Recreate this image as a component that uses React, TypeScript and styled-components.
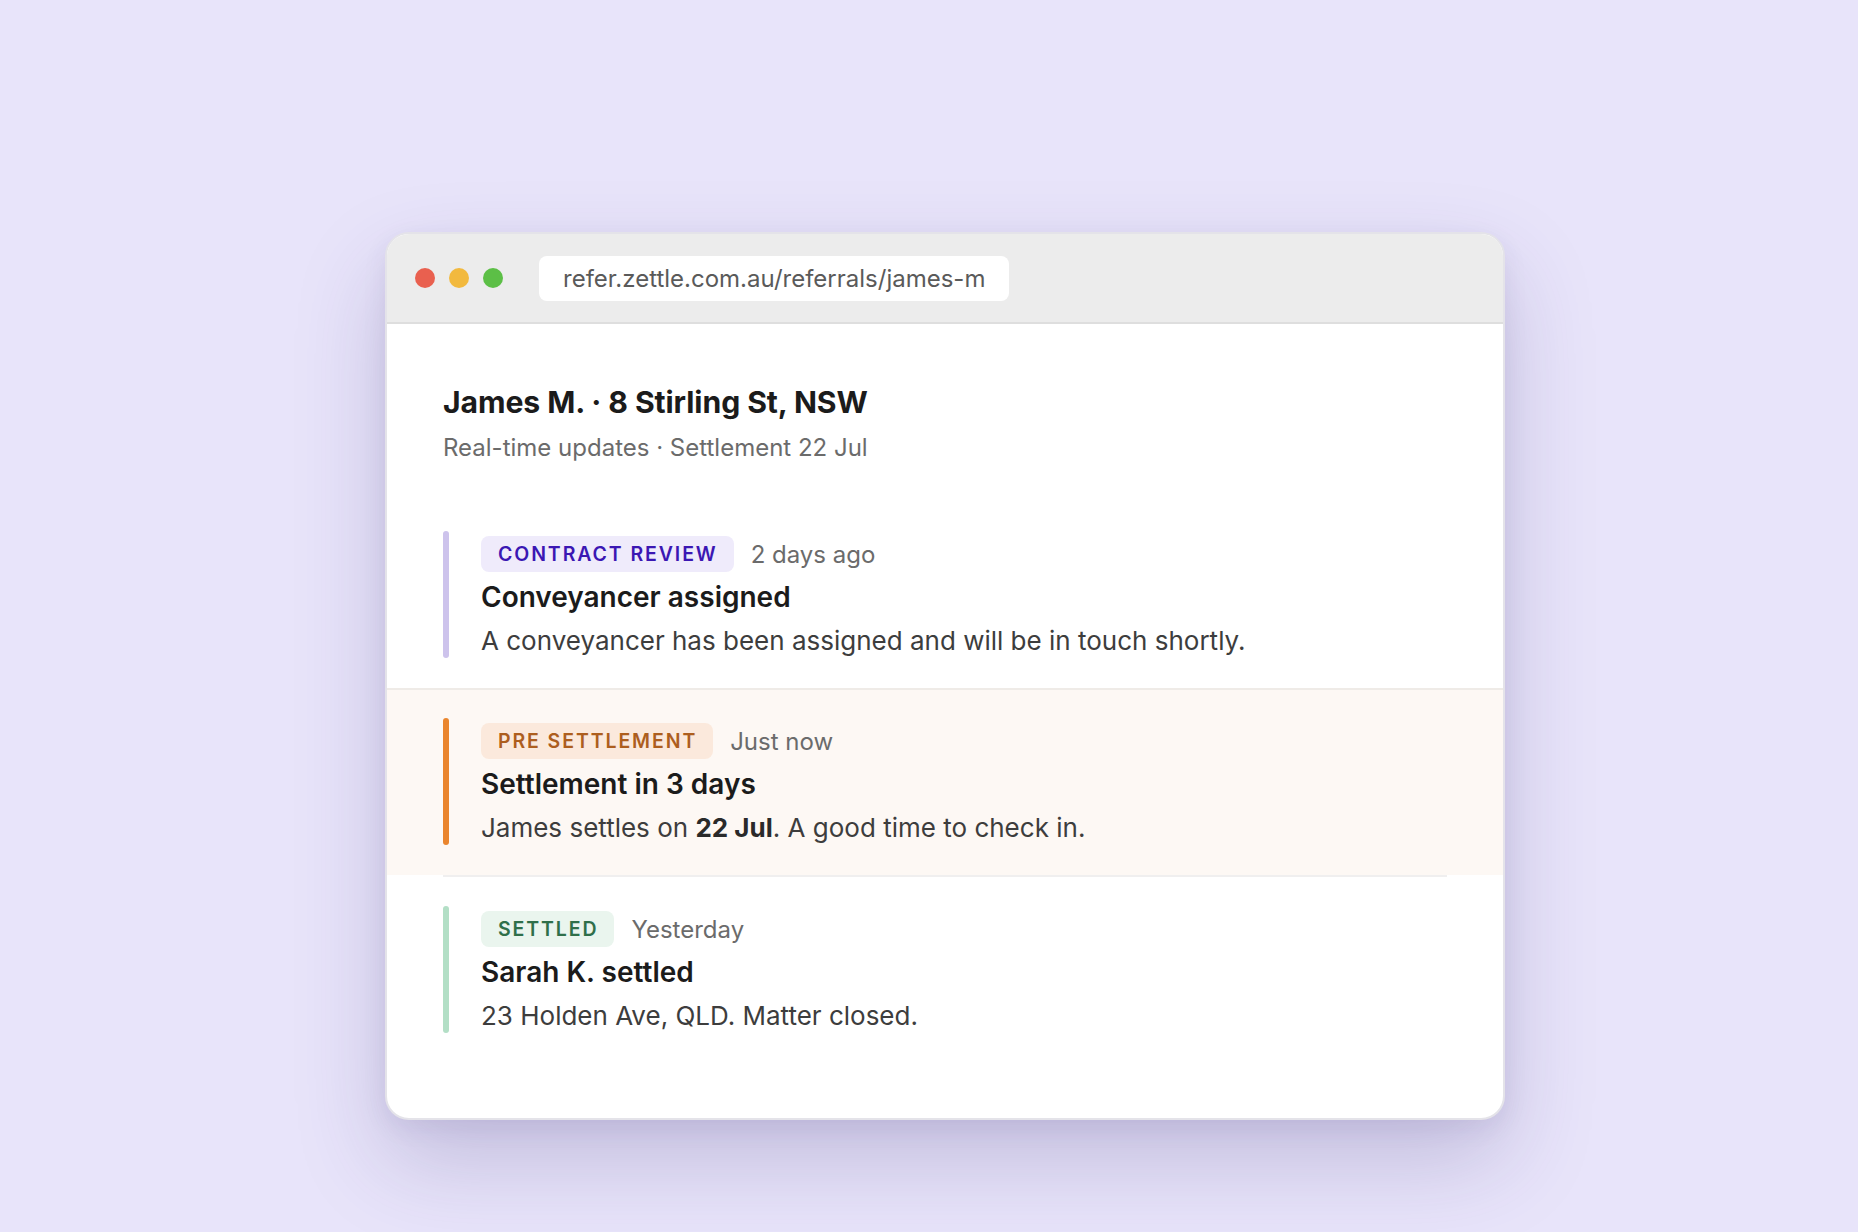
import React from "react";
import styled, { createGlobalStyle } from "styled-components";

const GlobalStyle = createGlobalStyle`
  html, body {
    margin: 0;
    padding: 0;
    background: #e8e4fa;
  }
  * {
    box-sizing: border-box;
  }
`;

const Page = styled.div`
  min-height: 1232px;
  padding: 232px 0 0 385px;
  font-family: Inter, "Noto Sans", sans-serif;
`;

const BrowserWindow = styled.div`
  width: 1120px;
  background: #ffffff;
  border: 2px solid #e4e3e9;
  border-radius: 24px;
  overflow: hidden;
  box-shadow: 0 40px 90px rgba(60, 48, 120, 0.22), 0 8px 24px rgba(60, 48, 120, 0.08);
`;

const TitleBar = styled.div`
  display: flex;
  align-items: center;
  height: 90px;
  padding: 0 0 0 28px;
  background: #ececec;
  border-bottom: 2px solid #dedede;
`;

const Dots = styled.div`
  display: flex;
  gap: 14px;
  margin-right: 36px;
`;

const Dot = styled.span<{ color: string }>`
  width: 20px;
  height: 20px;
  border-radius: 50%;
  background: ${(p) => p.color};
`;

const AddressBar = styled.div`
  height: 45px;
  display: flex;
  align-items: center;
  padding: 0 24px;
  background: #ffffff;
  border-radius: 8px;
  font-size: 24px;
  color: #5a5a5a;
`;

const Content = styled.div`
  padding: 60px 56px 55px;
`;

const Heading = styled.h1`
  margin: 0;
  font-size: 30.2px;
  line-height: 37px;
  font-weight: 700;
  color: #1b1b1b;
  letter-spacing: -0.1px;
`;

const SubHeading = styled.p`
  margin: 12px 0 0;
  font-size: 24px;
  line-height: 30px;
  color: #6b6b6b;
`;

const Feed = styled.div`
  margin-top: 38px;
`;

const Entry = styled.div<{ highlight?: boolean; first?: boolean }>`
  display: flex;
  padding: ${(p) => (p.first ? "30px 0" : "29px 0 30px")};
  border-top: ${(p) => (p.first ? "none" : "2px solid #f0efef")};
  ${(p) =>
    p.highlight &&
    `
    margin: 0 -56px;
    padding: 28px 56px 30px;
    background: #fdf8f4;
    border-top-color: #efebe7;
  `}
`;

const Bar = styled.div<{ color: string }>`
  flex: 0 0 6px;
  border-radius: 3px;
  background: ${(p) => p.color};
`;

const EntryBody = styled.div`
  padding-left: 32px;
`;

const Meta = styled.div`
  display: flex;
  align-items: center;
  gap: 17px;
  margin-top: 5px;
  height: 36px;
`;

const Badge = styled.span<{ bg: string; fg: string }>`
  display: inline-flex;
  align-items: center;
  height: 36px;
  padding: 0 16px 0 17px;
  border-radius: 8px;
  background: ${(p) => p.bg};
  color: ${(p) => p.fg};
  font-size: 19.5px;
  font-weight: 600;
  letter-spacing: 1.9px;
  text-transform: uppercase;
`;

const When = styled.span`
  font-size: 24px;
  color: #6b6b6b;
`;

const EntryTitle = styled.div`
  margin-top: 8px;
  font-size: 28px;
  line-height: 34px;
  font-weight: 600;
  color: #1b1b1b;
`;

const EntryText = styled.div`
  margin-top: 10px;
  font-size: 26px;
  line-height: 34px;
  color: #3d3d3d;

  b {
    font-weight: 700;
    color: #2a2a2a;
  }
`;

type Tone = "review" | "pre" | "settled";

const tones: Record<Tone, { bar: string; bg: string; fg: string }> = {
  review: { bar: "#cdc3ec", bg: "#efebfb", fg: "#3b17b3" },
  pre: { bar: "#ea852d", bg: "#fbe9dc", fg: "#ad5e1e" },
  settled: { bar: "#b3dfc6", bg: "#eaf5ee", fg: "#2f6f4a" },
};

interface UpdateProps {
  tone: Tone;
  label: string;
  when: string;
  title: string;
  children: React.ReactNode;
  highlight?: boolean;
  first?: boolean;
}

const Update = ({ tone, label, when, title, children, highlight, first }: UpdateProps) => {
  const t = tones[tone];
  return (
    <Entry highlight={highlight} first={first}>
      <Bar color={t.bar} />
      <EntryBody>
        <Meta>
          <Badge bg={t.bg} fg={t.fg}>
            {label}
          </Badge>
          <When>{when}</When>
        </Meta>
        <EntryTitle>{title}</EntryTitle>
        <EntryText>{children}</EntryText>
      </EntryBody>
    </Entry>
  );
};

const App = () => {
  return (
    <Page>
      <GlobalStyle />
      <BrowserWindow>
        <TitleBar>
          <Dots>
            <Dot color="#e9604f" />
            <Dot color="#f2b93e" />
            <Dot color="#5cbf46" />
          </Dots>
          <AddressBar>refer.zettle.com.au/referrals/james-m</AddressBar>
        </TitleBar>
        <Content>
          <Heading>James M. · 8 Stirling St, NSW</Heading>
          <SubHeading>Real-time updates · Settlement 22 Jul</SubHeading>
          <Feed>
            <Update tone="review" label="Contract review" when="2 days ago" title="Conveyancer assigned" first>
              A conveyancer has been assigned and will be in touch shortly.
            </Update>
            <Update tone="pre" label="Pre settlement" when="Just now" title="Settlement in 3 days" highlight>
              James settles on <b>22 Jul</b>. A good time to check in.
            </Update>
            <Update tone="settled" label="Settled" when="Yesterday" title="Sarah K. settled">
              23 Holden Ave, QLD. Matter closed.
            </Update>
          </Feed>
        </Content>
      </BrowserWindow>
    </Page>
  );
};

export default App;
